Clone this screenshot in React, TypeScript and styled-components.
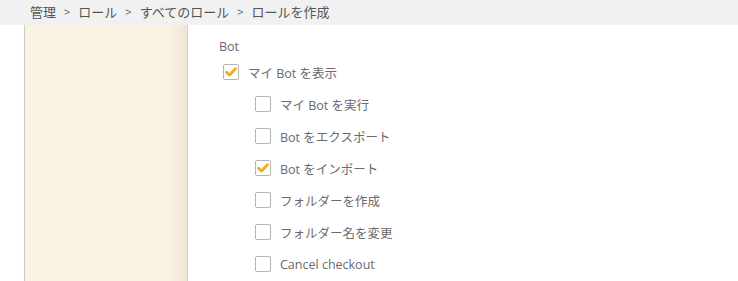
import React from "react";
import styled, { createGlobalStyle } from "styled-components";

const GlobalStyle = createGlobalStyle`
  body {
    margin: 0;
    background: #ffffff;
    font-family: "Open Sans", "Noto Sans CJK JP", sans-serif;
    color: #666666;
  }
`;

type Perm = { label: string; checked: boolean; nested: boolean };

const perms: Perm[] = [
  { label: "マイ Bot を表示", checked: true, nested: false },
  { label: "マイ Bot を実行", checked: false, nested: true },
  { label: "Bot をエクスポート", checked: false, nested: true },
  { label: "Bot をインポート", checked: true, nested: true },
  { label: "フォルダーを作成", checked: false, nested: true },
  { label: "フォルダー名を変更", checked: false, nested: true },
  { label: "Cancel checkout", checked: false, nested: true },
];

const Check: React.FC<{ checked: boolean }> = ({ checked }) => (
  <Box>
    {checked && (
      <svg width="12" height="10" viewBox="0 0 12 10">
        <path
          d="M1.5 5.2 L4.6 8 L10.5 1.8"
          fill="none"
          stroke="#f7a81b"
          strokeWidth="2.8"
          strokeLinecap="round"
          strokeLinejoin="round"
        />
      </svg>
    )}
  </Box>
);

const App: React.FC = () => (
  <>
    <GlobalStyle />
    <Breadcrumb>
      <span>管理</span>
      <Sep>&gt;</Sep>
      <span>ロール</span>
      <Sep>&gt;</Sep>
      <span>すべてのロール</span>
      <Sep>&gt;</Sep>
      <span>ロールを作成</span>
    </Breadcrumb>
    <Main>
      <Gutter />
      <Sidebar />
      <Content>
        <GroupLabel>Bot</GroupLabel>
        {perms.map((p) => (
          <Row key={p.label} $nested={p.nested}>
            <Check checked={p.checked} />
            <RowText>{p.label}</RowText>
          </Row>
        ))}
      </Content>
    </Main>
  </>
);

const Breadcrumb = styled.div`
  height: 25px;
  line-height: 24px;
  background: #f1f1f1;
  padding-left: 30px;
  font-size: 13px;
  color: #555555;
  display: flex;
`;

const Sep = styled.span`
  margin: 0 8px;
  font-size: 11px;
`;

const Main = styled.div`
  display: flex;
  min-height: 256px;
`;

const Gutter = styled.div`
  width: 24px;
  border-right: 1px solid #cccccc;
`;

const Sidebar = styled.div`
  width: 162px;
  background: linear-gradient(to right, #faf3e3 0%, #faf3e3 88%, #efe6d2 100%);
  border-right: 1px solid #d2d2d2;
`;

const Content = styled.div`
  flex: 1;
  padding: 13px 0 0 31px;
`;

const GroupLabel = styled.div`
  font-size: 12.5px;
  line-height: 18px;
  color: #6a6a6a;
`;

const Row = styled.div<{ $nested: boolean }>`
  height: 32px;
  display: flex;
  align-items: center;
  padding-left: ${(p) => (p.$nested ? 36 : 4)}px;
`;

const Box = styled.span`
  width: 14px;
  height: 14px;
  border: 1px solid #b3b3b3;
  border-radius: 2px;
  background: #ffffff;
  display: flex;
  align-items: center;
  justify-content: center;
  flex-shrink: 0;
`;

const RowText = styled.span`
  margin-left: 9px;
  font-size: 12.5px;
  color: #6a6a6a;
`;

export default App;
